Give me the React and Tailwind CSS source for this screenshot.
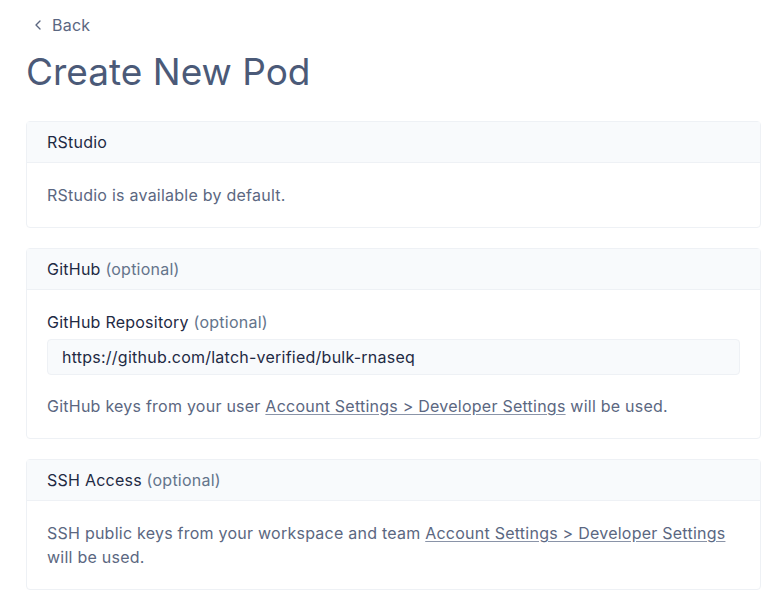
import { ChevronLeft } from 'lucide-react'

const Card = ({ title, optional, children }) => (
  <div className="rounded border border-[#eef1f5] bg-white">
    <div className="border-b border-[#eef1f5] bg-[#f8fafc] px-5 py-2 text-[16px] leading-6 text-[#1f2a44]">
      {title}
      {optional && <span className="text-[#64748b]"> (optional)</span>}
    </div>
    <div className="px-5 py-5 text-[16px] leading-6 text-[#5b6781]">{children}</div>
  </div>
)

const SettingsLink = () => (
  <a href="#" className="underline underline-offset-2 decoration-[#8a94a8]">
    Account Settings &gt; Developer Settings
  </a>
)

export default function App() {
  return (
    <div className="min-h-screen bg-white px-[26px] pt-[13px] font-['Inter',sans-serif] tracking-[0.015em]">
      <button className="flex items-center gap-[6px] pl-[4px] text-[16px] leading-6 text-[#5b6781]">
        <ChevronLeft className="h-[16px] w-[16px]" strokeWidth={2} />
        <span>Back</span>
      </button>
      <h1 className="mt-[13px] text-[37px] leading-[44px] tracking-[0] text-[#4b5a78]">Create New Pod</h1>

      <div className="mt-[27px] flex w-[735px] flex-col gap-5">
        <Card title="RStudio">RStudio is available by default.</Card>

        <Card title="GitHub" optional>
          <div className="text-[#1f2a44]">
            GitHub Repository <span className="text-[#64748b]">(optional)</span>
          </div>
          <input
            className="mt-[5px] h-9 w-full rounded border border-[#eef1f5] bg-[#f8fafc] px-[14px] text-[16px] tracking-[0.015em] text-[#1f2a44] outline-none"
            defaultValue="https://github.com/latch-verified/bulk-rnaseq"
          />
          <p className="mt-[19px]">
            GitHub keys from your user <SettingsLink /> will be used.
          </p>
        </Card>

        <Card title="SSH Access" optional>
          SSH public keys from your workspace and team <SettingsLink /> will be used.
        </Card>
      </div>
    </div>
  )
}
